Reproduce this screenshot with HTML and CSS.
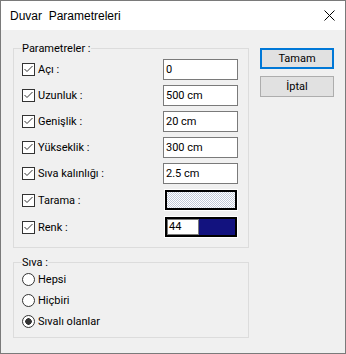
FILE: index.html
```html
<!DOCTYPE html>
<html lang="tr">
<head>
    <meta charset="UTF-8">
    <title>Duvar Parametreleri</title>
    <link rel="stylesheet" href="styles.css">
</head>
<body>
    <div class="window">
        <div class="titlebar">
            <span class="title">Duvar&nbsp; Parametreleri</span>
            <svg class="close" width="11" height="11" viewBox="0 0 11 11">
                <path d="M0.5 0.5 L10.5 10.5 M10.5 0.5 L0.5 10.5" stroke="#000" stroke-width="1"/>
            </svg>
        </div>

        <div class="content">
            <div class="groups">
                <fieldset class="group">
                    <legend>Parametreler :</legend>

                    <div class="row">
                        <span class="check"><svg class="box" width="13" height="13" viewBox="0 0 13 13"><rect x="0.5" y="0.5" width="12" height="12" fill="#fff" stroke="#333"/><path d="M2.5 6 L5 8.5 L10.5 3" fill="none" stroke="#333"/></svg>Açı :</span>
                        <div class="field">0</div>
                    </div>
                    <div class="row">
                        <span class="check"><svg class="box" width="13" height="13" viewBox="0 0 13 13"><rect x="0.5" y="0.5" width="12" height="12" fill="#fff" stroke="#333"/><path d="M2.5 6 L5 8.5 L10.5 3" fill="none" stroke="#333"/></svg>Uzunluk :</span>
                        <div class="field">500 cm</div>
                    </div>
                    <div class="row">
                        <span class="check"><svg class="box" width="13" height="13" viewBox="0 0 13 13"><rect x="0.5" y="0.5" width="12" height="12" fill="#fff" stroke="#333"/><path d="M2.5 6 L5 8.5 L10.5 3" fill="none" stroke="#333"/></svg>Genişlik :</span>
                        <div class="field">20 cm</div>
                    </div>
                    <div class="row">
                        <span class="check"><svg class="box" width="13" height="13" viewBox="0 0 13 13"><rect x="0.5" y="0.5" width="12" height="12" fill="#fff" stroke="#333"/><path d="M2.5 6 L5 8.5 L10.5 3" fill="none" stroke="#333"/></svg>Yükseklik :</span>
                        <div class="field">300 cm</div>
                    </div>
                    <div class="row">
                        <span class="check"><svg class="box" width="13" height="13" viewBox="0 0 13 13"><rect x="0.5" y="0.5" width="12" height="12" fill="#fff" stroke="#333"/><path d="M2.5 6 L5 8.5 L10.5 3" fill="none" stroke="#333"/></svg>Sıva kalınlığı :</span>
                        <div class="field">2.5 cm</div>
                    </div>
                    <div class="row swatch-row">
                        <span class="check"><svg class="box" width="13" height="13" viewBox="0 0 13 13"><rect x="0.5" y="0.5" width="12" height="12" fill="#fff" stroke="#333"/><path d="M2.5 6 L5 8.5 L10.5 3" fill="none" stroke="#333"/></svg>Tarama :</span>
                        <div class="swatch hatch"></div>
                    </div>
                    <div class="row swatch-row">
                        <span class="check"><svg class="box" width="13" height="13" viewBox="0 0 13 13"><rect x="0.5" y="0.5" width="12" height="12" fill="#fff" stroke="#333"/><path d="M2.5 6 L5 8.5 L10.5 3" fill="none" stroke="#333"/></svg>Renk :</span>
                        <div class="swatch color">
                            <span class="color-no">44</span>
                            <span class="color-fill"></span>
                        </div>
                    </div>
                </fieldset>

                <fieldset class="group plaster">
                    <legend>Sıva :</legend>
                    <div class="option"><span class="radio"></span>Hepsi</div>
                    <div class="option"><span class="radio"></span>Hiçbiri</div>
                    <div class="option"><span class="radio on"></span>Sıvalı olanlar</div>
                </fieldset>
            </div>

            <div class="buttons">
                <button class="btn default">Tamam</button>
                <button class="btn">İptal</button>
            </div>
        </div>
    </div>
</body>
</html>
```

FILE: styles.css
```css
body {
    margin: 0;
    font-family: Roboto, 'Liberation Sans', sans-serif;
    font-size: 11px;
    color: #000;
}

.window {
    width: 346px;
    height: 354px;
    box-sizing: border-box;
    border: 1px solid #7a7a7a;
    display: flex;
    flex-direction: column;
    background: #f0f0f0;
}

.titlebar {
    height: 29px;
    background: #fff;
    display: flex;
    align-items: center;
    justify-content: space-between;
    padding: 0 10px 0 9px;
}

.title {
    font-family: 'Liberation Sans', sans-serif;
    font-size: 12px;
}

.content {
    flex: 1;
    display: flex;
    gap: 11px;
    padding: 12px 0 0 12px;
}

.group {
    width: 236px;
    box-sizing: border-box;
    margin: 0;
    border: 1px solid #dcdcdc;
    padding: 4px 9px 9px 8px;
}

.group legend {
    padding: 0;
    line-height: 13px;
}

.row {
    display: grid;
    grid-template-columns: 141px 75px;
    height: 21px;
    align-items: center;
    margin-bottom: 5px;
}

.row:last-child {
    margin-bottom: 0;
}

.swatch-row {
    height: 22px;
    margin-top: 1px;
}

.check {
    display: flex;
    align-items: center;
    gap: 3px;
}

.field {
    height: 21px;
    box-sizing: border-box;
    border: 1px solid #7a7a7a;
    background: #fff;
    padding: 0 2px;
    line-height: 19px;
}

.swatch {
    width: 72px;
    height: 20px;
    box-sizing: border-box;
    margin-left: 2px;
    border: 2px solid #000;
    outline: 1px solid #fff;
}

.hatch {
    background: repeating-conic-gradient(#c3cbd9 0 25%, #fff 0 50%) 0 0 / 2px 2px;
}

.color {
    display: flex;
    background: #f0f0f0;
}

.color-no {
    width: 32px;
    box-sizing: border-box;
    border: 1px solid #7a7a7a;
    background: #fff;
    padding-left: 1px;
    line-height: 14px;
}

.color-fill {
    flex: 1;
    background: #12127f;
}

.plaster {
    margin-top: 8px;
    padding: 0 9px 5px 8px;
}

.option {
    height: 21px;
    display: flex;
    align-items: center;
    gap: 3px;
}

.radio {
    width: 13px;
    height: 13px;
    box-sizing: border-box;
    border: 1px solid #333;
    border-radius: 50%;
    background: #fff;
}

.radio.on {
    background: radial-gradient(circle, #333 0 3px, #fff 3.5px);
}

.buttons {
    display: flex;
    flex-direction: column;
    gap: 7px;
    padding-top: 6px;
}

.btn {
    width: 74px;
    height: 21px;
    box-sizing: border-box;
    background: #e1e1e1;
    border: 1px solid #adadad;
    font-family: inherit;
    font-size: 11px;
    color: #000;
    padding: 0;
}

.btn.default {
    border: 2px solid #0078d7;
}
```
